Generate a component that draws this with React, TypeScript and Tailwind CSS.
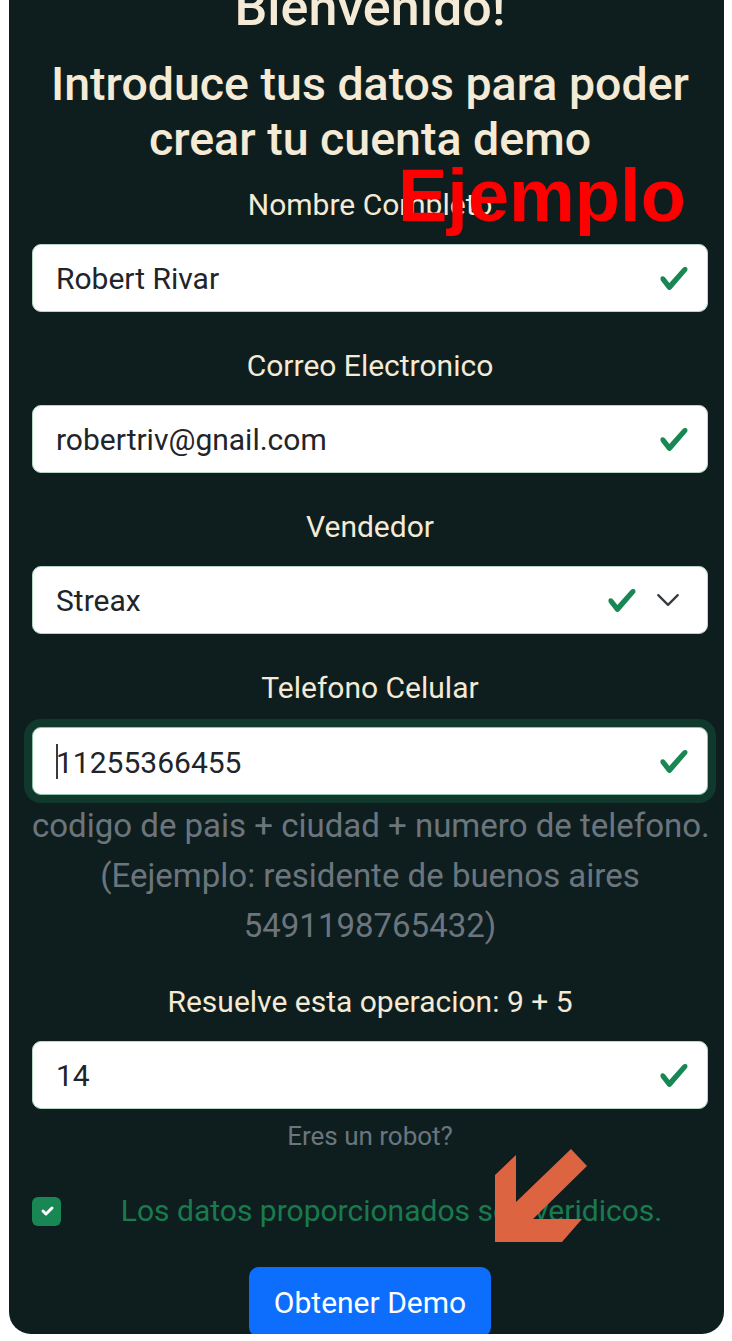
import { ReactNode } from "react"

function Check() {
    return (
        <svg viewBox="0 0 8 8" className="h-[31px] w-[32px] shrink-0">
            <path fill="#198754" d="M2.3 6.73.6 4.53c-.4-1.04.46-1.4 1.1-.8l1.1 1.4 3.4-3.8c.6-.63 1.6-.27 1.2.7l-4 4.6c-.43.5-.8.4-1.1.1z" />
        </svg>
    )
}

function Chevron() {
    return (
        <svg viewBox="0 0 16 16" className="ml-[17px] h-[26px] w-[26px] shrink-0">
            <path fill="none" stroke="#343a40" strokeLinecap="round" strokeLinejoin="round" strokeWidth="1.4" d="m2 5 6 6 6-6" />
        </svg>
    )
}

function Field({ label, value, select, focus, first }: { label: string, value: ReactNode, select?: boolean, focus?: boolean, first?: boolean }) {
    return (
        <div className={first ? "mt-[18px]" : "mt-[34px]"}>
            <label className="block text-center text-[30px] leading-[40px] text-[#f4ead5]">{label}</label>
            <div className={"mt-[19px] flex h-[68px] items-center rounded-[9px] border bg-white pl-[23px] text-[30px] text-[#212529] " + (focus ? "border-[#8cc3a6] shadow-[0_0_0_8px_rgba(25,135,84,0.25)] pr-[17px]" : "border-[#b5d6c3] " + (select ? "pr-[26px]" : "pr-[17px]"))}>
                <span className="flex-1">{value}</span>
                <Check />
                {select && <Chevron />}
            </div>
        </div>
    )
}

export default function App() {
    return (
        <div className="relative min-h-[1341px] bg-white" style={{ fontFamily: "Roboto, 'Noto Sans', sans-serif" }}>
            <div className="ml-[9px] h-[1334px] w-[715px] overflow-hidden rounded-b-[22px] bg-[#0e1e1f] pl-[23px] pr-[16px]">
                <h1 className="-mt-[23px] text-center text-[52px] font-medium leading-[62px] text-[#f4ead5]">Bienvenido!</h1>
                <h2 className="mt-[18px] text-center text-[46.5px] font-medium leading-[55px] text-[#f4ead5]">
                    Introduce tus datos para poder<br />crear tu cuenta demo
                </h2>

                <Field first label="Nombre Completo" value="Robert Rivar" />
                <Field label="Correo Electronico" value="robertriv@gnail.com" />
                <Field label="Vendedor" value="Streax" select />
                <Field label="Telefono Celular" focus value={<><span className="-mr-[2px] inline-block h-[35px] w-[2px] translate-y-[6px] bg-[#3a3a3a] align-baseline"></span>11255366455</>} />

                <div className="mt-[6px] text-center text-[33px] leading-[50px] text-[#6c757d]">
                    <div className="whitespace-nowrap">codigo de pais + ciudad + numero de telefono.</div>
                    <div>(Eejemplo: residente de buenos aires</div>
                    <div>5491198765432)</div>
                </div>

                <div className="-mt-[3px]">
                    <Field label="Resuelve esta operacion: 9 + 5" value="14" />
                </div>
                <p className="mt-[10px] text-center text-[26px] leading-[34px] text-[#6c757d]">Eres un robot?</p>

                <div className="mt-[38px] flex items-center">
                    <span className="flex h-[29px] w-[29px] shrink-0 items-center justify-center rounded-[6px] bg-[#198754]">
                        <svg viewBox="0 0 20 20" className="h-[20px] w-[20px]">
                            <path fill="none" stroke="#fff" strokeLinecap="round" strokeLinejoin="round" strokeWidth="3" d="m6 10 3 3 6-6" />
                        </svg>
                    </span>
                    <label className="ml-[14px] flex-1 text-center text-[30px] leading-[40px] text-[#1a7a4e]">Los datos proporcionados son veridicos.</label>
                </div>

                <button className="mx-auto mt-[36px] block h-[70px] w-[242px] rounded-[10px] bg-[#0d6efd] text-[30px] text-white">Obtener Demo</button>
            </div>

            <span className="absolute left-[398px] top-[159px] text-[74px] font-bold leading-[74px] text-[#ff0000]" style={{ fontFamily: "'Liberation Sans', Arial, sans-serif" }}>Ejemplo</span>

            <svg className="absolute left-[480px] top-[1140px] h-[110px] w-[120px]" viewBox="0 0 120 110">
                <polygon fill="#dc6440" points="15,35 36,15 36,62 91,9 107,26 53,79 102,79 82,102 15,102" />
            </svg>
        </div>
    )
}
